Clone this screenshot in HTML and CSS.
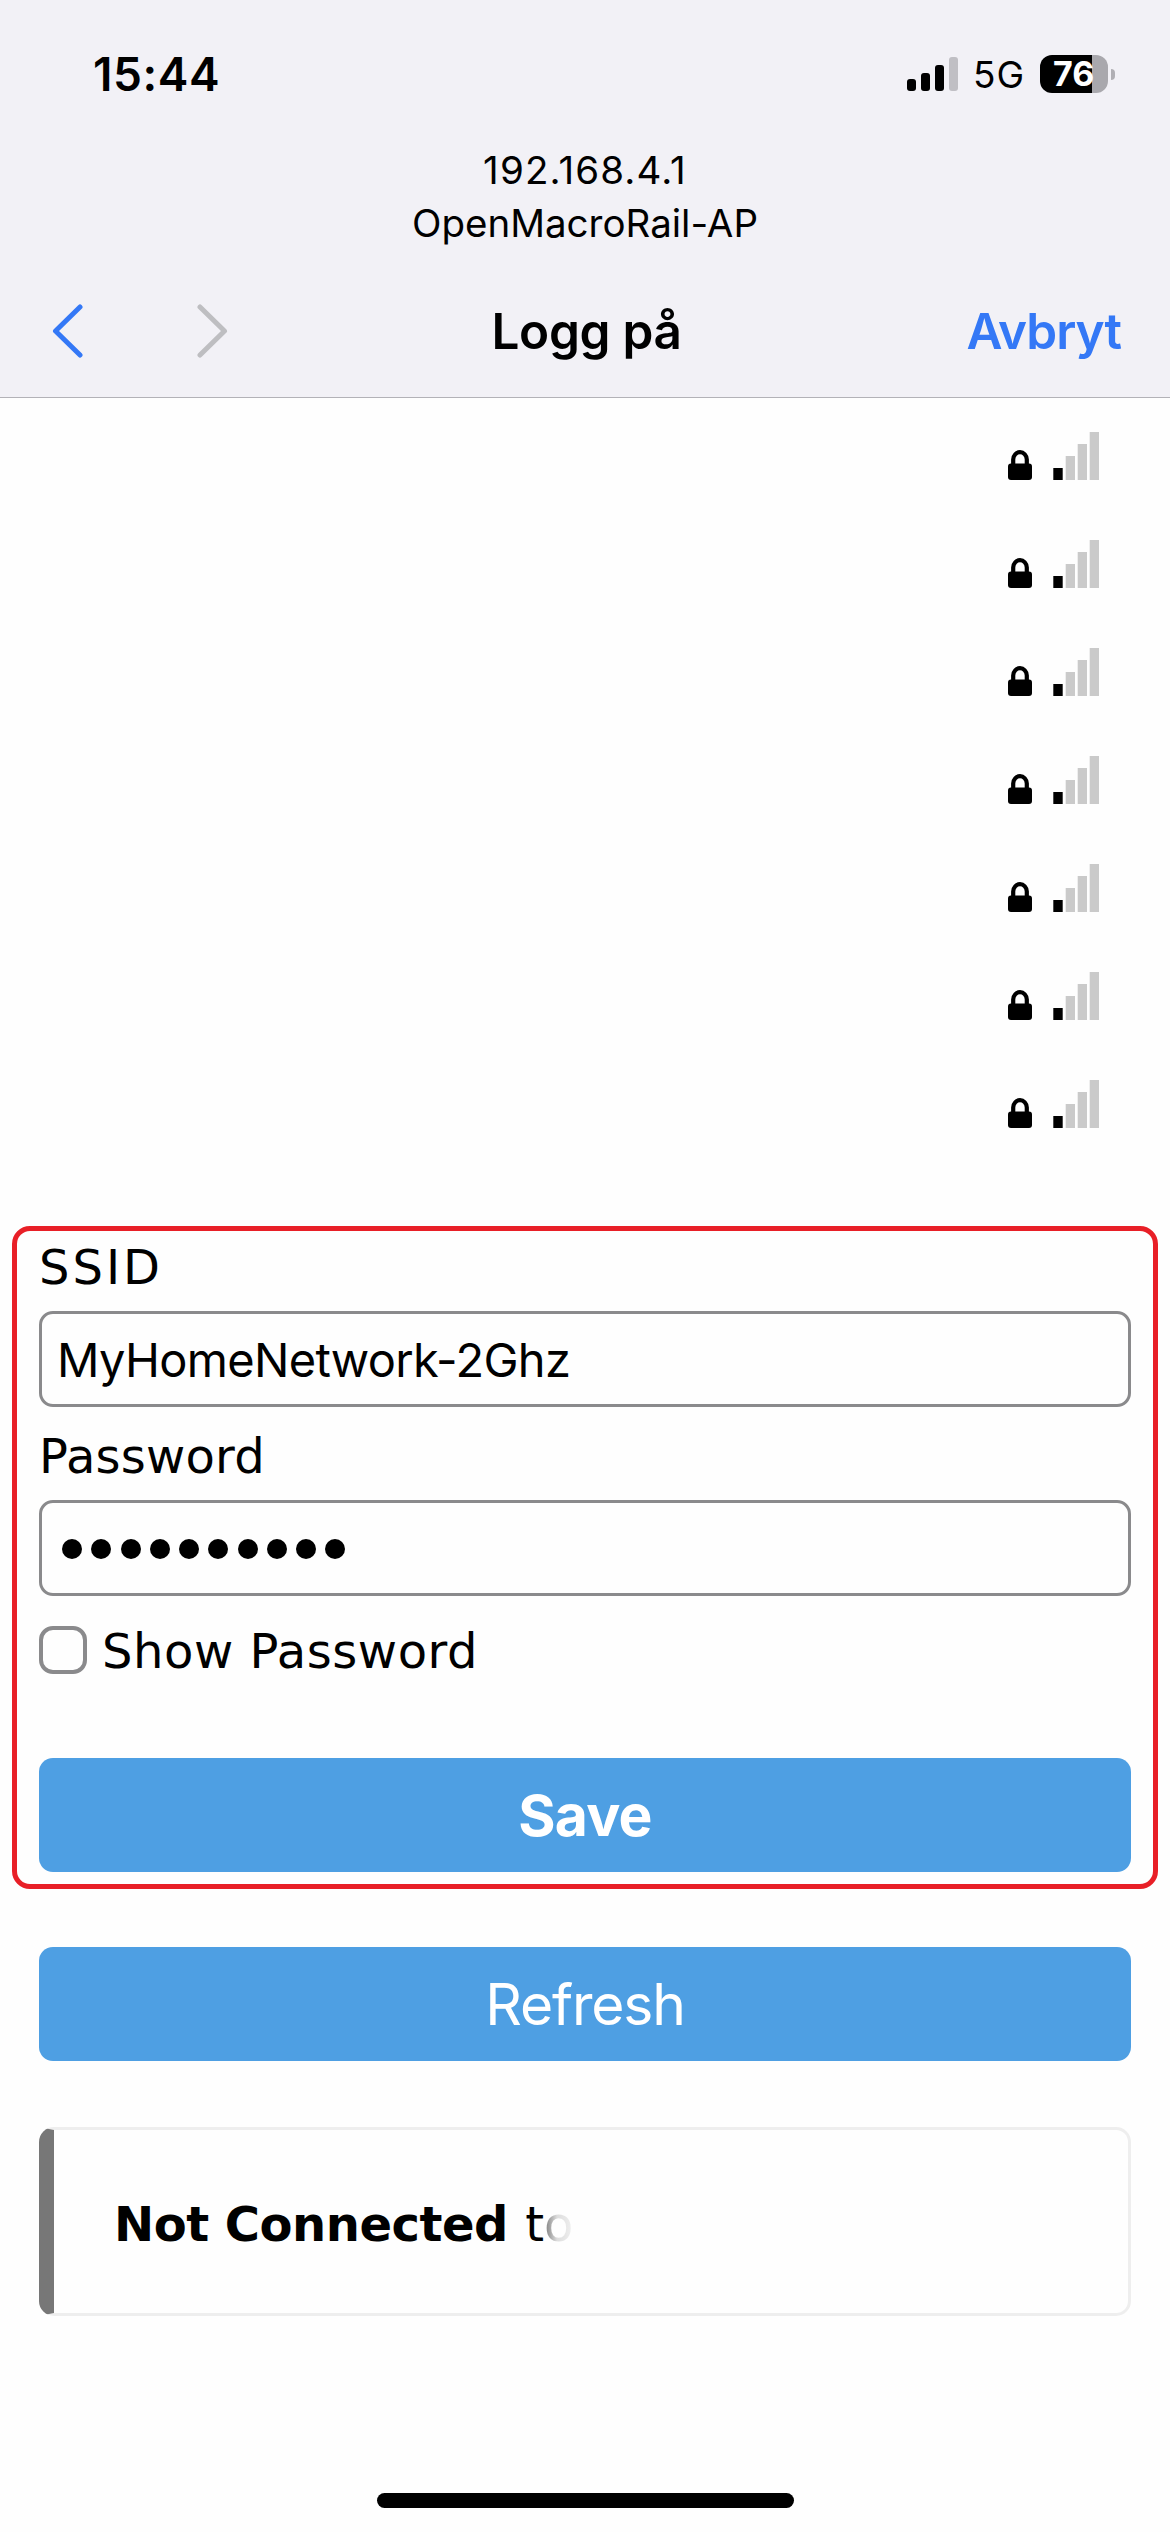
FILE: index.html
```html
<!DOCTYPE html>
<html lang="nb">
<head>
<meta charset="utf-8">
<title>Logg på</title>
<link rel="stylesheet" href="styles.css">
</head>
<body>
<svg width="0" height="0" class="defs">
  <symbol id="lock" viewBox="0 0 24 30"><path d="M5.2 16V9.500a6.800 7.300 0 0 1 13.600 0V16" fill="none" stroke="#000" stroke-width="4.2"/><rect y="13.5" width="24" height="16.5" rx="3"/></symbol>
  <symbol id="bars" viewBox="0 0 46 48"><path d="M0.300 36h9.400v12H0.300z"/><path d="M12.700 24H22v24h-9.300zM24.700 12H34v36h-9.300zM36.700 0H46v48h-9.300z" fill="#cacaca"/></symbol>
</svg>
<header class="top">
  <div class="status">
    <span class="time">15:44</span>
    <div class="status-right">
      <svg class="cell" width="51" height="34" viewBox="0 0 51 34"><rect y="22" width="9" height="12" rx="3"/><rect x="14" y="16" width="9" height="18" rx="3"/><rect x="28" y="8" width="9" height="26" rx="3"/><rect x="42" width="9" height="34" rx="3" fill="#c0bfc4"/></svg>
      <span class="net">5G</span>
      <div class="battery"><span class="pct">76</span></div>
      <i class="nub"></i>
    </div>
  </div>
  <div class="address"><span class="ip">192.168.4.1</span><br><span class="ap">OpenMacroRail-AP</span></div>
  <nav class="nav">
    <div class="arrows">
      <svg width="31" height="54" viewBox="0 0 31 54"><path d="M28 3 3.500 27 28 51" fill="none" stroke="#3478f6" stroke-width="5" stroke-linecap="round" stroke-linejoin="round"/></svg>
      <svg width="31" height="54" viewBox="0 0 31 54"><path d="M3 3 27.500 27 3 51" fill="none" stroke="#bebec1" stroke-width="5" stroke-linecap="round" stroke-linejoin="round"/></svg>
    </div>
    <h1 class="title">Logg på</h1>
    <a class="cancel">Avbryt</a>
  </nav>
</header>
<main>
  <ul class="networks">
    <li><svg class="lock"><use href="#lock"/></svg><svg class="bars"><use href="#bars"/></svg></li>
    <li><svg class="lock"><use href="#lock"/></svg><svg class="bars"><use href="#bars"/></svg></li>
    <li><svg class="lock"><use href="#lock"/></svg><svg class="bars"><use href="#bars"/></svg></li>
    <li><svg class="lock"><use href="#lock"/></svg><svg class="bars"><use href="#bars"/></svg></li>
    <li><svg class="lock"><use href="#lock"/></svg><svg class="bars"><use href="#bars"/></svg></li>
    <li><svg class="lock"><use href="#lock"/></svg><svg class="bars"><use href="#bars"/></svg></li>
    <li><svg class="lock"><use href="#lock"/></svg><svg class="bars"><use href="#bars"/></svg></li>
  </ul>
  <form class="wifi">
    <label class="label ssid">SSID</label>
    <div class="field"><span class="value">MyHomeNetwork-2Ghz</span></div>
    <label class="label pw">Password</label>
    <div class="field dots"><i></i><i></i><i></i><i></i><i></i><i></i><i></i><i></i><i></i><i></i></div>
    <div class="check"><i class="box"></i><span class="show">Show Password</span></div>
    <div class="btn save"><span>Save</span></div>
  </form>
  <div class="btn refresh"><span>Refresh</span></div>
  <section class="card"><p><b>Not Connected</b> <span class="t">t</span><span class="fade">o</span></p></section>
</main>
<div class="home"></div>
</body>
</html>
```
FILE: styles.css
```css
* { box-sizing: border-box; margin: 0; padding: 0; }
body { width: 1170px; height: 2532px; background: #fefefe; color: #000; font-family: Inter, sans-serif; overflow: hidden; }
.defs { position: absolute; }
svg { display: block; }
.top { height: 398px; background: #f2f1f6; border-bottom: 1px solid #b3b2b7; }
.status { height: 144px; padding: 4px 55px 0 93px; display: flex; align-items: center; justify-content: space-between; }
.time { font-size: 46px; font-weight: 600; line-height: 60px; letter-spacing: 0.58px; }
.status-right { display: flex; align-items: center; }
.net { width: 50px; margin: 2px 16px 0 15px; padding-right: 1px; box-sizing: content-box; font-size: 37px; line-height: 48px; letter-spacing: 1px; white-space: nowrap; }
.battery { width: 68px; height: 38px; border-radius: 12px; background: linear-gradient(90deg, #000 52px, #a9a8ad 52px); color: #fff; font-size: 34px; font-weight: 700; line-height: 38px; padding-left: 13px; }
.nub { width: 4px; height: 11px; margin-left: 3px; background: #b0afb4; border-radius: 0 4px 4px 0; }
.address { text-align: center; font-size: 38.500px; line-height: 53px; }
.ip { letter-spacing: 1.13px; }
.nav { height: 147px; padding: 14px 49px 0 52px; display: grid; grid-template-columns: 1fr auto 1fr; align-items: center; }
.arrows { display: flex; gap: 114px; }
.title { font-size: 49.500px; font-weight: 600; line-height: 60px; letter-spacing: -0.32px; }
.cancel { justify-self: end; color: #3478f6; font-size: 49.500px; font-weight: 600; line-height: 60px; letter-spacing: -1px; }
.networks { list-style: none; padding-top: 4px; }
.networks li { height: 108px; padding: 0 71px 30px 0; display: flex; align-items: flex-end; justify-content: flex-end; gap: 21px; }
.lock { width: 24px; height: 30px; }
.bars { width: 46px; height: 48px; }
.wifi { height: 663px; margin: 68px 12px 0; padding: 6px 22px 0; border: 5px solid #e81f27; border-radius: 18px; }
.label { display: block; font: 48px/60px "DejaVu Sans", sans-serif; }
.ssid { letter-spacing: 2.97px; }
.pw { margin-top: 19px; letter-spacing: 0.2px; }
.field { height: 96px; margin-top: 14px; padding-left: 15px; border: 3px solid #8a8a8c; border-radius: 14px; display: flex; align-items: center; }
.value { font-size: 47px; line-height: 60px; letter-spacing: -0.67px; padding-top: 1px; }
.dots { padding: 2px 0 0 20px; gap: 9.250px; }
.dots i { width: 20px; height: 20px; border-radius: 50%; background: #000; }
.check { height: 48px; margin-top: 30px; display: flex; align-items: center; gap: 15px; font: 48px/60px "DejaVu Sans", sans-serif; }
.box { width: 48px; height: 48px; border: 4px solid #8a8a8c; border-radius: 14px; }
.show { margin-top: 1px; letter-spacing: 0.54px; white-space: nowrap; }
.btn { height: 114px; border-radius: 14px; background: #4e9fe3; color: #fff; text-align: center; font-size: 57px; line-height: 115px; }
.save { margin-top: 84px; font-weight: 700; letter-spacing: -0.8px; }
.refresh { margin: 58px 39px 0; font-weight: 400; letter-spacing: -1.17px; }
.card { height: 189px; margin: 66px 39px 0; border: 3px solid #eee; border-left: 15px solid #777; border-radius: 15px; padding: 64px 0 0 60px; font: 48px/60px "DejaVu Sans", sans-serif; }
.card b { letter-spacing: -0.49px; }
.t { margin-left: 2px; }
.fade { color: transparent; background: linear-gradient(90deg, #777, #ddd 45%, #f0f0f0); background-clip: text; -webkit-background-clip: text; }
.home { width: 417px; height: 15px; margin: 177px auto 0; border-radius: 8px; background: #000; }
```
